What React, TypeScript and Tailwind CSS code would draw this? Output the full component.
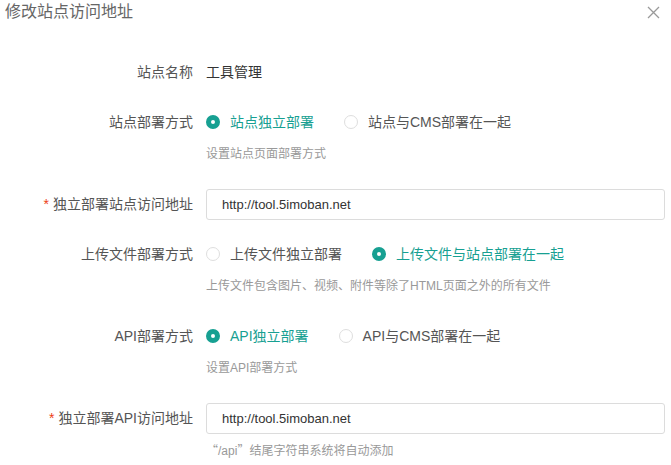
import { useState } from 'react';

type Opt = { value: string; label: string };

function Radio({ checked, label, onClick }: { checked: boolean; label: string; onClick: () => void }) {
  return (
    <label onClick={onClick} className="flex items-center mr-[30px] cursor-pointer select-none">
      <span
        className={
          checked
            ? 'w-[14px] h-[14px] rounded-full border-[5px] border-[#17a092] bg-white shrink-0'
            : 'w-[14px] h-[14px] rounded-full border border-[#dedede] bg-white shrink-0'
        }
      />
      <span className={checked ? 'ml-[10px] text-[14px] text-[#17a092]' : 'ml-[10px] text-[14px] text-[#555]'}>{label}</span>
    </label>
  );
}

function Item({
  label,
  required,
  help,
  children,
}: {
  label: string;
  required?: boolean;
  help?: React.ReactNode;
  children: React.ReactNode;
}) {
  return (
    <div className={help ? 'mb-[24px]' : 'mb-[18px]'}>
      <div className="flex items-center h-8">
        <div className="w-[193px] shrink-0 text-right text-[14px] text-[#555]">
          {required && <span className="text-[#ed4014] mr-[4px]">*</span>}
          {label}
        </div>
        <div className="flex-1 flex items-center ml-[13px] mr-[6px]">{children}</div>
      </div>
      {help && (
        <div className="mt-[6px] ml-[206px] h-5 leading-5 text-[12px] text-[#999]">{help}</div>
      )}
    </div>
  );
}

function RadioGroup({ options, value, onChange }: { options: Opt[]; value: string; onChange: (v: string) => void }) {
  return (
    <div className="flex items-center">
      {options.map((o) => (
        <Radio key={o.value} checked={value === o.value} label={o.label} onClick={() => onChange(o.value)} />
      ))}
    </div>
  );
}

const cjk = { fontFamily: '"Noto Sans CJK SC", sans-serif' };

export default function App() {
  const [site, setSite] = useState('alone');
  const [upload, setUpload] = useState('site');
  const [api, setApi] = useState('alone');

  return (
    <div
      className="w-[671px] h-[465px] bg-white overflow-hidden relative"
      style={{ fontFamily: '"Liberation Sans", "Noto Sans CJK SC", sans-serif' }}
    >
      <div className="flex items-center justify-between h-6 pl-[5px] pr-[11px]">
        <span className="text-[16px] text-[#666]">修改站点访问地址</span>
        <svg width="13" height="13" viewBox="0 0 13 13" className="mt-[1px]">
          <path d="M1 1L12 12M12 1L1 12" stroke="#9a9a9a" strokeWidth="1.3" fill="none" />
        </svg>
      </div>

      <div className="mt-[32px]">
        <Item label="站点名称">
          <span className="text-[14px] text-[#333]">工具管理</span>
        </Item>

        <Item label="站点部署方式" help="设置站点页面部署方式">
          <RadioGroup
            value={site}
            onChange={setSite}
            options={[
              { value: 'alone', label: '站点独立部署' },
              { value: 'cms', label: '站点与CMS部署在一起' },
            ]}
          />
        </Item>

        <Item label="独立部署站点访问地址" required>
          <input
            defaultValue="http://tool.5imoban.net"
            className="w-full h-[31px] border border-[#dcdcdc] rounded-[3px] pl-[15px] text-[13px] text-[#333] outline-none"
          />
        </Item>

        <Item label="上传文件部署方式" help="上传文件包含图片、视频、附件等除了HTML页面之外的所有文件">
          <RadioGroup
            value={upload}
            onChange={setUpload}
            options={[
              { value: 'alone', label: '上传文件独立部署' },
              { value: 'site', label: '上传文件与站点部署在一起' },
            ]}
          />
        </Item>

        <Item label="API部署方式" help="设置API部署方式">
          <RadioGroup
            value={api}
            onChange={setApi}
            options={[
              { value: 'alone', label: 'API独立部署' },
              { value: 'cms', label: 'API与CMS部署在一起' },
            ]}
          />
        </Item>

        <Item
          label="独立部署API访问地址"
          required
          help={
            <>
              <span style={cjk}>“</span>/api<span style={cjk}>”</span>结尾字符串系统将自动添加
            </>
          }
        >
          <input
            defaultValue="http://tool.5imoban.net"
            className="w-full h-[31px] border border-[#dcdcdc] rounded-[3px] pl-[15px] text-[13px] text-[#333] outline-none"
          />
        </Item>
      </div>
    </div>
  );
}
